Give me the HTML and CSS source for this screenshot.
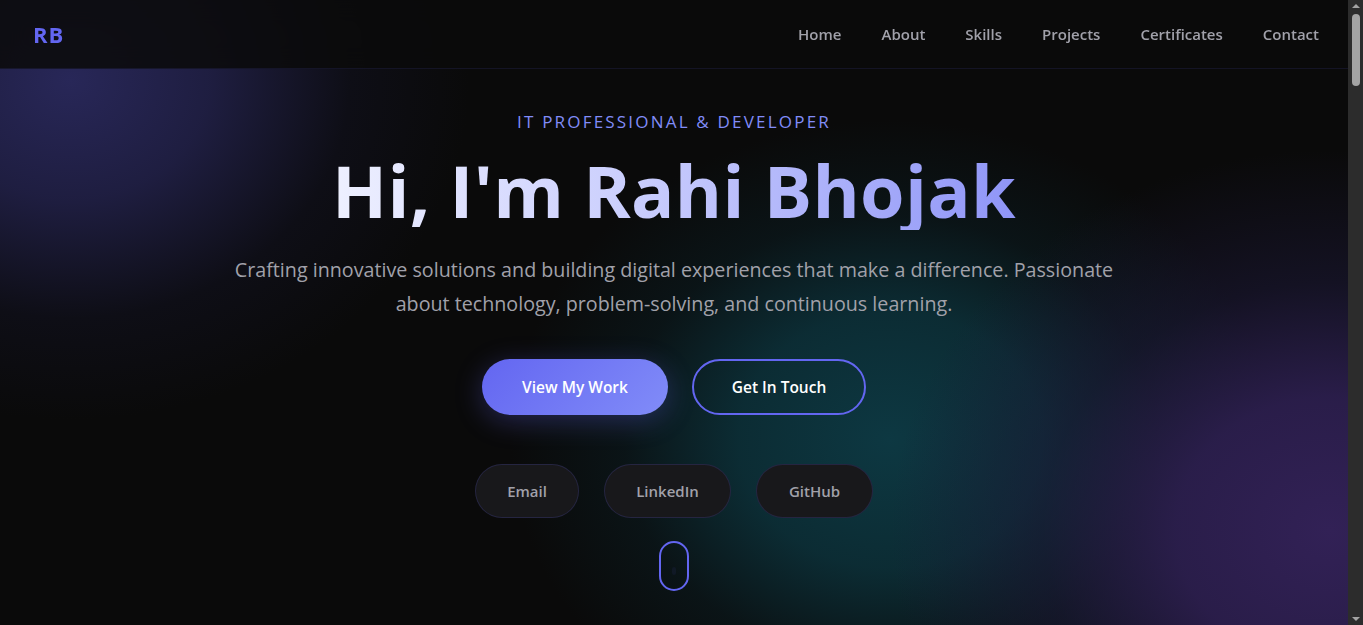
FILE: index.html
```html
<!DOCTYPE html>
<html lang="en">
<head>
<meta charset="utf-8">
<title>Rahi Bhojak</title>
<link rel="stylesheet" href="styles.css">
</head>
<body>
<div class="page">
  <header class="navbar">
    <a class="logo" href="#">RB</a>
    <nav class="nav-links">
      <a href="#">Home</a>
      <a href="#">About</a>
      <a href="#">Skills</a>
      <a href="#">Projects</a>
      <a href="#">Certificates</a>
      <a href="#">Contact</a>
    </nav>
  </header>
  <main>
    <section class="hero">
      <div class="hero-content">
        <p class="tagline">IT PROFESSIONAL &amp; DEVELOPER</p>
        <h1 class="title">Hi, I'm Rahi Bhojak</h1>
        <p class="intro">Crafting innovative solutions and building digital experiences that make a difference. Passionate about technology, problem-solving, and continuous learning.</p>
        <div class="cta">
          <a class="btn btn-primary" href="#">View My Work</a>
          <a class="btn btn-outline" href="#">Get In Touch</a>
        </div>
        <div class="socials">
          <a class="pill pill-email" href="#">Email</a>
          <a class="pill pill-linkedin" href="#">LinkedIn</a>
          <a class="pill pill-github" href="#">GitHub</a>
        </div>
        <div class="mouse"><span class="wheel"></span></div>
      </div>
    </section>
  </main>
</div>
<div class="scrollbar">
  <span class="arrow arrow-up"></span>
  <span class="thumb"></span>
  <span class="arrow arrow-down"></span>
</div>
</body>
</html>
```
FILE: styles.css
```css
* { box-sizing: border-box; margin: 0; padding: 0; }
html, body { height: 100%; overflow: hidden; background: #0a0a0a; }
body {
  color: #e4e4e7;
  font-family: "Open Sans", "Noto Sans", sans-serif;
}
a { text-decoration: none; color: inherit; }

.page {
  position: relative;
  margin-right: 15px;
  height: 100%;
}

.navbar {
  position: absolute;
  top: 0; left: 0; right: 0;
  height: 69px;
  z-index: 10;
  display: flex;
  align-items: center;
  justify-content: space-between;
  padding: 0 29px 1px 33px;
  background: rgba(10, 10, 10, 0.86);
  backdrop-filter: blur(12px);
  border-bottom: 1px solid rgba(99, 102, 241, 0.12);
}
.logo {
  font-size: 22px;
  font-weight: 700;
  color: #6366f1;
  letter-spacing: 1px;
}
.nav-links { display: flex; gap: 40px; }
.nav-links a {
  font-size: 15px;
  font-weight: 600;
  color: #a1a1aa;
}

.hero {
  position: relative;
  height: 625px;
  padding-top: 110px;
  background:
    radial-gradient(ellipse 400px 340px at 70px 80px, rgba(40, 39, 88, 1) 0%, rgba(34, 33, 74, 0.85) 35%, rgba(20, 20, 40, 0.4) 70%, rgba(10, 10, 10, 0) 100%),
    radial-gradient(ellipse 440px 380px at 1330px 530px, rgba(50, 33, 86, 1) 0%, rgba(45, 31, 80, 0.9) 35%, rgba(30, 26, 60, 0.5) 65%, rgba(10, 10, 10, 0) 100%),
    radial-gradient(ellipse 380px 320px at 890px 440px, rgba(13, 56, 66, 1) 0%, rgba(12, 50, 59, 0.85) 40%, rgba(11, 32, 38, 0.45) 70%, rgba(10, 10, 10, 0) 100%),
    #0a0a0a;
}

.hero-content {
  display: flex;
  flex-direction: column;
  align-items: center;
  text-align: center;
}
.tagline {
  font-size: 17px;
  line-height: 24px;
  letter-spacing: 2.2px;
  color: #818cf8;
  font-weight: 500;
}
.title {
  margin-top: 16px;
  font-size: 72px;
  line-height: 80px;
  font-weight: 700;
  letter-spacing: 0.3px;
  background: linear-gradient(90deg, #eef0ff 0%, #c9cdfd 45%, #8f95f7 100%);
  -webkit-background-clip: text;
  background-clip: text;
  color: transparent;
}
.intro {
  margin-top: 23px;
  max-width: 900px;
  font-size: 19.7px;
  line-height: 34px;
  font-stretch: 88%;
  color: #a1a1aa;
}
.cta {
  margin-top: 38px;
  display: flex;
  gap: 24px;
}
.btn {
  height: 56px;
  border-radius: 28px;
  display: flex;
  align-items: center;
  justify-content: center;
  font-size: 15.5px;
  font-weight: 600;
  color: #fff;
}
.btn-primary {
  width: 186px;
  background: linear-gradient(135deg, #6366f1, #818cf8);
  box-shadow: 0 6px 28px rgba(99, 102, 241, 0.3);
}
.btn-outline {
  width: 174px;
  border: 2px solid #6366f1;
}
.socials {
  margin-top: 49px;
  display: flex;
  gap: 25px;
}
.pill {
  height: 54px;
  border-radius: 27px;
  display: flex;
  align-items: center;
  justify-content: center;
  background: #18181b;
  border: 1px solid rgba(99, 102, 241, 0.18);
  font-size: 15px;
  font-weight: 600;
  color: #a1a1aa;
}
.pill-email { width: 104px; }
.pill-linkedin { width: 127px; }
.pill-github { width: 117px; }
.mouse {
  margin-top: 23px;
  width: 30px;
  height: 50px;
  border: 2px solid #6366f1;
  border-radius: 15px;
  display: flex;
  justify-content: center;
}
.wheel {
  margin-top: 24px;
  width: 4px;
  height: 8px;
  border-radius: 2px;
  background: rgba(99, 102, 241, 0.07);
}

.scrollbar {
  position: fixed;
  top: 0; right: 0;
  width: 15px;
  height: 100%;
  background: #2c2c2c;
  display: flex;
  flex-direction: column;
  align-items: center;
}
.arrow {
  width: 0; height: 0;
  border-left: 4px solid transparent;
  border-right: 4px solid transparent;
}
.arrow-up { margin-top: 4px; border-bottom: 4px solid #a3a3a3; }
.arrow-down { margin-top: auto; margin-bottom: 4px; border-top: 4px solid #a3a3a3; }
.thumb {
  margin-top: 6px;
  width: 8px;
  height: 72px;
  border-radius: 4px;
  background: #a3a3a3;
}
```
